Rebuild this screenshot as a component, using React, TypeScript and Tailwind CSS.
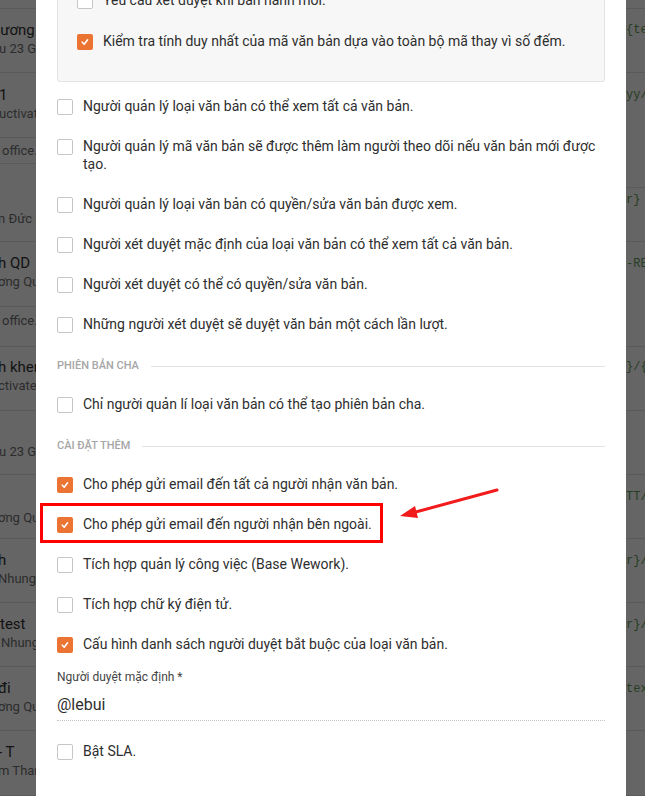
import React from "react";

type Row = { h: string; pt: string; title?: string; sub?: string; ts?: string; ss?: string };

const LEFT_ROWS: Row[] = [
  { h: "h-[9px]", pt: "pt-0" },
  { h: "h-[64px]", pt: "pt-[12px]", title: "Thương", sub: "u 23 Giang", ts: "ml-[-17px]", ss: "ml-[-1px]" },
  { h: "h-[65px]", pt: "pt-[13px]", title: "1", sub: "uctivated", ts: "ml-[-1px]", ss: "ml-[-1px]" },
  { h: "h-[26px]", pt: "pt-[4px]", sub: "office.", ss: "ml-[2px]" },
  { h: "h-[78px]", pt: "pt-[46px]", sub: "n Đức Lâm", ss: "ml-[-2px]" },
  { h: "h-[65px]", pt: "pt-[12px]", title: "h QD", sub: "ơng Quyết", ts: "ml-[-2px]", ss: "ml-[-2px]" },
  { h: "h-[40px]", pt: "pt-[5px]", sub: "office.", ss: "ml-[2px]" },
  { h: "h-[64px]", pt: "pt-[11px]", title: "h khen", sub: "ctivated", ts: "ml-[-2px]", ss: "ml-[-2px]" },
  { h: "h-[64px]", pt: "pt-[32px]", sub: "u 23 Giang", ss: "ml-[-1px]" },
  { h: "h-[64px]", pt: "pt-[34px]", sub: "ơng Quyết", ss: "ml-[-2px]" },
  { h: "h-[64px]", pt: "pt-[12px]", title: "h", sub: "Nhung", ts: "ml-[-2px]", ss: "ml-[-2px]" },
  { h: "h-[64px]", pt: "pt-[12px]", title: "test", sub: "Nhung", ts: "ml-0", ss: "ml-[1px]" },
  { h: "h-[64px]", pt: "pt-[12px]", title: "đi", sub: "ơng Quyết", ts: "ml-[-2px]", ss: "ml-[-2px]" },
  { h: "h-[65px]", pt: "pt-[12px]", title: "- T", sub: "m Thanh", ts: "ml-[-2px]", ss: "ml-[-2px]" },
];

const RIGHT_ROWS: { h: string; pt: string; code?: string }[] = [
  { h: "h-[9px]", pt: "pt-0" },
  { h: "h-[64px]", pt: "pt-[13px]", code: "{tenVanBan}" },
  { h: "h-[115px]", pt: "pt-[14px]", code: "yy/MM" },
  { h: "h-[54px]", pt: "pt-[4px]", code: "r}" },
  { h: "h-[105px]", pt: "pt-[14px]", code: "-REV" },
  { h: "h-[64px]", pt: "pt-[12px]", code: "}/{nam}" },
  { h: "h-[64px]", pt: "pt-0" },
  { h: "h-[64px]", pt: "pt-[14px]", code: "TT/{" },
  { h: "h-[64px]", pt: "pt-[14px]", code: "r}/{" },
  { h: "h-[64px]", pt: "pt-[14px]", code: "r}/{" },
  { h: "h-[64px]", pt: "pt-[14px]", code: "text" },
  { h: "h-[65px]", pt: "pt-0" },
];

function Checkbox({ checked }: { checked?: boolean }) {
  if (checked) {
    return (
      <div className="flex h-4 w-4 shrink-0 items-center justify-center rounded-[2px] bg-[#ec7432]">
        <svg width="10" height="10" viewBox="0 0 10 10" fill="none">
          <path d="M2.3 5.2 L4.2 7.2 L7.6 2.8" stroke="#fff" strokeWidth="1.6" strokeLinecap="round" strokeLinejoin="round" />
        </svg>
      </div>
    );
  }
  return <div className="h-4 w-4 shrink-0 rounded-[2px] border border-[#c6c6c6] bg-white" />;
}

function Option({ label, checked, className = "" }: { label: string; checked?: boolean; className?: string }) {
  return (
    <div className={`flex items-start gap-[10px] ${className}`}>
      <div className="mt-[2px] flex shrink-0">
        <Checkbox checked={checked} />
      </div>
      <div className="text-[14px] leading-[18px] text-[#2e2e2e]">{label}</div>
    </div>
  );
}

function SectionTitle({ label, className = "" }: { label: string; className?: string }) {
  return (
    <div className={`flex h-4 items-center gap-3 ${className}`}>
      <span className="whitespace-nowrap text-[11px] font-medium uppercase text-[#a6a6a6]">{label}</span>
      <span className="h-px flex-1 bg-[#e3e3e3]" />
    </div>
  );
}

export default function App() {
  return (
    <div className="flex h-[796px] w-[645px] overflow-hidden bg-[#656565] font-['Roboto',sans-serif]">
      {/* Left — dimmed list behind the modal */}
      <div className="w-[36px] shrink-0 overflow-hidden">
        {LEFT_ROWS.map((r, i) => (
          <div key={i} className={`${r.h} ${r.pt} border-b border-[#5a5a5a] whitespace-nowrap`}>
            {r.title && <div className={`${r.ts} text-[15px] leading-[19px] text-[#121212]`}>{r.title}</div>}
            {r.sub && <div className={`${r.ss} text-[13px] leading-[18px] text-[#2c2c2c]`}>{r.sub}</div>}
          </div>
        ))}
      </div>

      {/* Modal */}
      <div className="relative w-[590px] shrink-0 bg-white px-[21px]">
        <div className="mt-[-30px] flex flex-col gap-[23px] rounded-[3px] border border-[#e3e3e3] bg-[#f7f7f7] px-[19px] pb-[31px] pt-[20px]">
          <Option label="Yêu cầu xét duyệt khi ban hành mới." />
          <Option checked label="Kiểm tra tính duy nhất của mã văn bản dựa vào toàn bộ mã thay vì số đếm." />
        </div>

        <div className="flex flex-col">
          <Option className="mt-[15px]" label="Người quản lý loại văn bản có thể xem tất cả văn bản." />
          <Option className="mt-[22px]" label="Người quản lý mã văn bản sẽ được thêm làm người theo dõi nếu văn bản mới được tạo." />
          <Option className="mt-[22px]" label="Người quản lý loại văn bản có quyền/sửa văn bản được xem." />
          <Option className="mt-[22px]" label="Người xét duyệt mặc định của loại văn bản có thể xem tất cả văn bản." />
          <Option className="mt-[22px]" label="Người xét duyệt có thể có quyền/sửa văn bản." />
          <Option className="mt-[22px]" label="Những người xét duyệt sẽ duyệt văn bản một cách lần lượt." />

          <SectionTitle className="mt-[25px]" label="Phiên bản cha" />
          <Option className="mt-[21px]" label="Chỉ người quản lí loại văn bản có thể tạo phiên bản cha." />

          <SectionTitle className="mt-[25px]" label="Cài đặt thêm" />
          <Option className="mt-[21px]" checked label="Cho phép gửi email đến tất cả người nhận văn bản." />
          <div className="relative mt-[22px]">
            <Option checked label="Cho phép gửi email đến người nhận bên ngoài." />
            <div className="absolute left-[-17px] top-[-12px] h-[40px] w-[343px] border-[3px] border-[#f00]" />
          </div>
          <Option className="mt-[22px]" label="Tích hợp quản lý công việc (Base Wework)." />
          <Option className="mt-[22px]" label="Tích hợp chữ ký điện tử." />
          <Option className="mt-[22px]" checked label="Cấu hình danh sách người duyệt bắt buộc của loại văn bản." />

          <div className="mt-[16px] text-[12px] leading-[16px] text-[#444]">Người duyệt mặc định *</div>
          <div className="mt-[5px] flex h-[31px] items-center border-b border-dotted border-[#c4c4c4] text-[16px] text-[#2e2e2e]">
            @lebui
          </div>
          <Option className="mt-[21px]" label="Bật SLA." />
        </div>

        {/* Annotation arrow */}
        <svg className="absolute left-[360px] top-[484px]" width="106" height="40" viewBox="0 0 106 40" fill="none">
          <line x1="101" y1="6" x2="16" y2="29" stroke="#f21b1b" strokeWidth="3" strokeLinecap="round" />
          <path d="M4 32 L19 22 L22 34 Z" fill="#f21b1b" />
        </svg>
      </div>

      {/* Right — dimmed code column behind the modal */}
      <div className="flex-1 overflow-hidden">
        {RIGHT_ROWS.map((r, i) => (
          <div key={i} className={`${r.h} ${r.pt} border-b border-[#5a5a5a] whitespace-nowrap`}>
            {r.code && <div className="font-['Liberation_Mono',monospace] text-[12px] leading-[16px] text-[#253d22]">{r.code}</div>}
          </div>
        ))}
      </div>
    </div>
  );
}
